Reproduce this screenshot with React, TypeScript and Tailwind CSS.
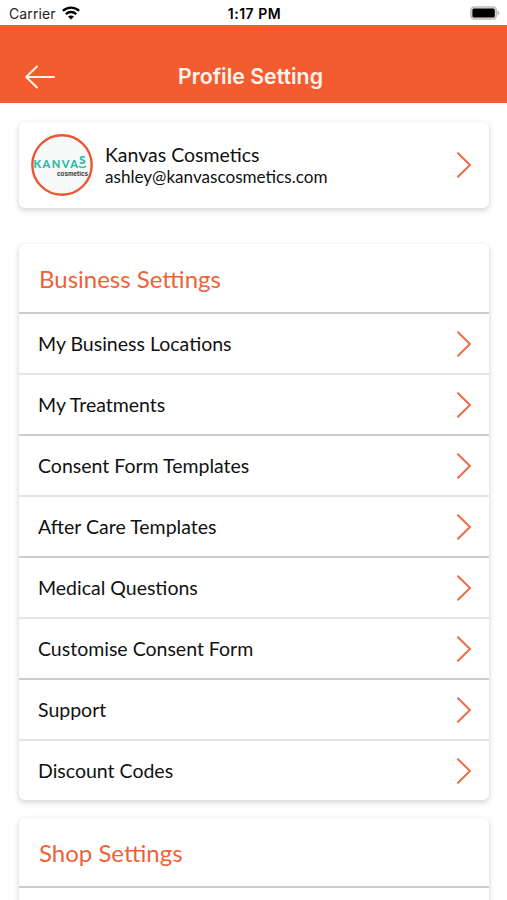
const businessLinks = [
  'My Business Locations',
  'My Treatments',
  'Consent Form Templates',
  'After Care Templates',
  'Medical Questions',
  'Customise Consent Form',
  'Support',
  'Discount Codes',
]

function Chevron() {
  return (
    <svg width="16" height="28" viewBox="0 0 16 28" fill="none" className="shrink-0">
      <path d="M2 2.2L14 14L2 25.8" stroke="#ef683f" strokeWidth="1.9" strokeLinecap="round" />
    </svg>
  )
}

function StatusBar() {
  return (
    <div className="grid grid-cols-3 items-center h-[25px] pl-[9px] pr-[7px] pt-[2px] font-['Inter',sans-serif] text-black">
      <div className="flex items-center gap-[6px]">
        <span className="text-[14px] leading-none tracking-[0.1px] text-[#222]">Carrier</span>
        <svg width="18" height="14" viewBox="0 0 18 14" fill="none" stroke="#000" strokeWidth="2.3" className="-mt-px">
          <path d="M0.9 4.9C5.3 0.5 12.7 0.5 17.1 4.9" />
          <path d="M3.8 8.1C6.7 5.3 11.3 5.3 14.2 8.1" />
          <path d="M9 13.6L6 10.6C7.6 9 10.4 9 12 10.6Z" fill="#000" stroke="none" />
        </svg>
      </div>
      <span className="text-center text-[14px] leading-none font-semibold tracking-[0.5px]">1:17 PM</span>
      <svg width="31" height="14" viewBox="0 0 31 14" className="justify-self-end -mt-px">
        <rect x="1.8" y="0.9" width="25.6" height="12.2" rx="3.6" fill="#ddd" stroke="#b9b9b9" strokeWidth="1.4" />
        <rect x="3.4" y="2.5" width="22.4" height="9" rx="1.6" fill="#000" />
        <path d="M28.6 4.6C31 5.4 31 8.6 28.6 9.4Z" fill="#b5b5b5" />
      </svg>
    </div>
  )
}

function Avatar() {
  return (
    <svg width="62" height="62" viewBox="0 0 62 62" className="shrink-0">
      <circle cx="31" cy="31" r="29.7" fill="#f8f9f9" stroke="#e9562f" strokeWidth="2.4" />
      <g fontFamily="Lato, sans-serif" fontWeight="900" fill="#27b8a8">
        <text x="2.4" y="33.6" fontSize="11" letterSpacing="1.5">KANVA</text>
        <text x="48" y="30.4" fontSize="12">S</text>
      </g>
      <path d="M48 32C49.6 33.9 53.4 33.9 55 32" stroke="#27b8a8" strokeWidth="1.3" fill="none" />
      <text x="26" y="41.6" fontSize="6.3" fontFamily="'Liberation Sans', sans-serif" fontWeight="700" fill="#333" textLength="31" lengthAdjust="spacingAndGlyphs">cosmetics</text>
    </svg>
  )
}

const card = 'bg-white rounded-[6px] shadow-[0_2px_5px_1px_rgba(0,0,0,0.15)]'

export default function App() {
  return (
    <div className="w-full h-[900px] overflow-hidden bg-white font-['Lato',sans-serif] text-[#111]">
      <StatusBar />

      <header className="grid grid-cols-[60px_1fr_66px] items-center h-[78px] pt-[25px] bg-[#f25c2e] text-white">
        <button aria-label="Back" className="pl-[24px]">
          <svg width="32" height="24" viewBox="0 0 32 24" fill="none" stroke="#fff3ec" strokeWidth="2" strokeLinecap="round" strokeLinejoin="round">
            <path d="M2.2 12H30M13 1.5L2.2 12L13 22.5" />
          </svg>
        </button>
        <h1 className="text-center font-['Inter',sans-serif] font-semibold text-[21.3px] leading-none text-[#fff3ec]">Profile Setting</h1>
      </header>

      <main className="pl-[19px] pr-[18px] pt-[19px]">
        <section className={`${card} flex items-center h-[86px] pl-[12px] pr-[17px]`}>
          <Avatar />
          <div className="flex-1 pl-[12px]">
            <p className="text-[19.5px] leading-[24px]">Kanvas Cosmetics</p>
            <p className="text-[17.1px] leading-[20px]">ashley@kanvascosmetics.com</p>
          </div>
          <Chevron />
        </section>

        <section className={`${card} mt-[36px]`}>
          <h2 className="flex items-center h-[68px] pl-[20px] pt-[2px] text-[24px] text-[#ee6238]">Business Settings</h2>
          <ul>
            {businessLinks.map((label, i) => (
              <li
                key={label}
                className={`flex items-center justify-between h-[60.95px] pl-[19px] pr-[17px] pt-px text-[19.5px] ${
                  i % 2 === 0 ? 'border-t-2 border-[#cbcbcb]' : 'border-t-2 border-[#e4e4e4]'
                }`}
              >
                {label}
                <Chevron />
              </li>
            ))}
          </ul>
        </section>

        <section className={`${card} mt-[18px] h-[120px]`}>
          <h2 className="flex items-center h-[68px] pl-[20px] pt-[2px] text-[24px] text-[#ee6238]">Shop Settings</h2>
          <div className="border-t-2 border-[#cbcbcb]" />
        </section>
      </main>
    </div>
  )
}
